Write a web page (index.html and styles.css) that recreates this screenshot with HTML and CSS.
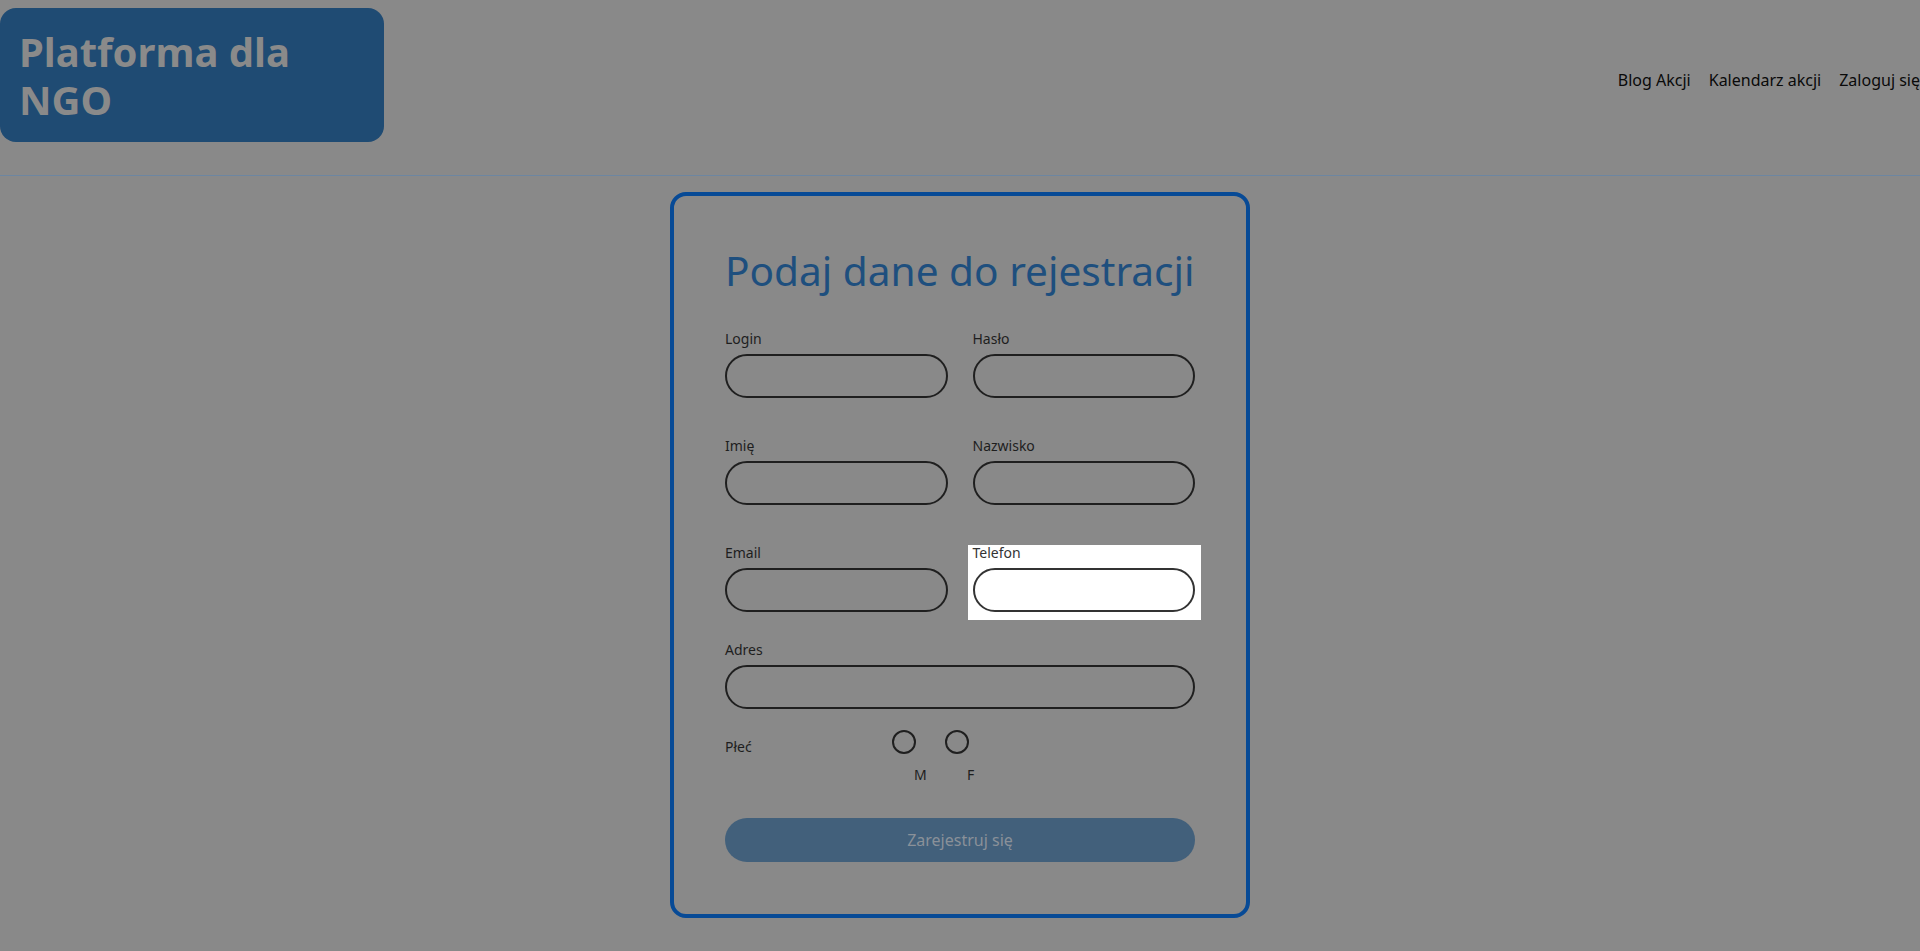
FILE: index.html
```html
<!DOCTYPE html>
<html lang="pl">
<head>
<meta charset="utf-8">
<title>Platforma dla NGO – Rejestracja</title>
<link rel="stylesheet" href="styles.css">
</head>
<body>
<header class="site-header">
  <div class="logo">Platforma dla NGO</div>
  <nav class="main-nav">
    <a href="#">Blog Akcji</a>
    <a href="#">Kalendarz akcji</a>
    <a href="#">Zaloguj się</a>
  </nav>
</header>
<main class="page">
  <form class="card">
    <h1 class="title">Podaj dane do rejestracji</h1>
    <div class="grid">
      <div class="field">
        <label class="label">Login</label>
        <input class="input" type="text">
      </div>
      <div class="field">
        <label class="label">Hasło</label>
        <input class="input" type="password">
      </div>
      <div class="field">
        <label class="label">Imię</label>
        <input class="input" type="text">
      </div>
      <div class="field">
        <label class="label">Nazwisko</label>
        <input class="input" type="text">
      </div>
      <div class="field">
        <label class="label">Email</label>
        <input class="input" type="email">
      </div>
      <div class="field field-highlight">
        <label class="label">Telefon</label>
        <input class="input" type="tel">
      </div>
    </div>
    <div class="field field-wide">
      <label class="label">Adres</label>
      <input class="input" type="text">
    </div>
    <div class="gender">
      <span class="gender-label">Płeć</span>
      <div class="gender-options">
        <div class="option">
          <span class="radio"></span>
          <span class="option-label">M</span>
        </div>
        <div class="option">
          <span class="radio"></span>
          <span class="option-label">F</span>
        </div>
      </div>
    </div>
    <button class="submit" type="button">Zarejestruj się</button>
  </form>
</main>
</body>
</html>
```
FILE: styles.css
```css
html, body {
  margin: 0;
  padding: 0;
}
body {
  background: #898989;
  font-family: "Noto Sans", "Open Sans", sans-serif;
  color: #1c1c1c;
  overflow-x: hidden;
}
.site-header {
  display: flex;
  align-items: center;
  padding: 8px 0 33px;
  border-bottom: 1px solid #6d86a1;
}
.logo {
  width: 20%;
  box-sizing: border-box;
  padding: 20px 20px 18px 19px;
  background: #1f4b73;
  color: #8a8a8a;
  font-weight: 700;
  font-size: 40px;
  line-height: 48px;
  border-radius: 16px;
}
.main-nav {
  margin-left: auto;
  margin-top: 9px;
  display: flex;
  gap: 18px;
  white-space: nowrap;
}
.main-nav a {
  color: #0a0a0a;
  text-decoration: none;
  font-size: 16px;
}
.page {
  display: flex;
  justify-content: center;
  padding-top: 16px;
}
.card {
  width: 580px;
  box-sizing: border-box;
  border: 4px solid #074a96;
  border-radius: 16px;
  padding: 48px 51px 52px;
}
.title {
  margin: 0 0 31px;
  font-weight: 400;
  font-size: 40.6px;
  line-height: 54px;
  white-space: nowrap;
  color: #1e4f7e;
}
.grid {
  display: grid;
  grid-template-columns: 1fr 1fr;
  column-gap: 25px;
  row-gap: 38px;
}
.field {
  display: flex;
  flex-direction: column;
}
.label {
  font-size: 14px;
  line-height: 19px;
  margin-bottom: 6px;
  color: #1e1e1e;
}
.input {
  height: 44px;
  box-sizing: border-box;
  border: 2px solid #1f1f1f;
  border-radius: 22px;
  background: transparent;
  width: 100%;
  margin: 0;
  padding: 0 14px;
  font-family: inherit;
}
.field-highlight {
  background: #ffffff;
  margin: 2px -6px -8px -5px;
  padding: 0 6px 8px 5px;
}
.field-highlight .label {
  margin-top: -2px;
  color: #333333;
}
.field-highlight .input {
  border-color: #333333;
  background: #ffffff;
}
.field-wide {
  margin-top: 28px;
}
.gender {
  display: flex;
  align-items: flex-start;
  margin-top: 21px;
}
.gender-label {
  width: 167px;
  margin-top: 7px;
  font-size: 14px;
  line-height: 19px;
  color: #1e1e1e;
}
.gender-options {
  display: flex;
  gap: 20px;
}
.option {
  display: flex;
  flex-direction: column;
  width: 33px;
}
.radio {
  width: 24px;
  height: 24px;
  box-sizing: border-box;
  border: 2px solid #1f1f1f;
  border-radius: 50%;
}
.option-label {
  margin-top: 11px;
  padding-left: 22px;
  font-size: 14px;
  line-height: 19px;
  color: #1e1e1e;
}
.submit {
  display: block;
  width: 100%;
  height: 44px;
  margin-top: 34px;
  border: 0;
  border-radius: 22px;
  background: #42607b;
  color: #8a9199;
  font-family: inherit;
  font-size: 16px;
}
```
